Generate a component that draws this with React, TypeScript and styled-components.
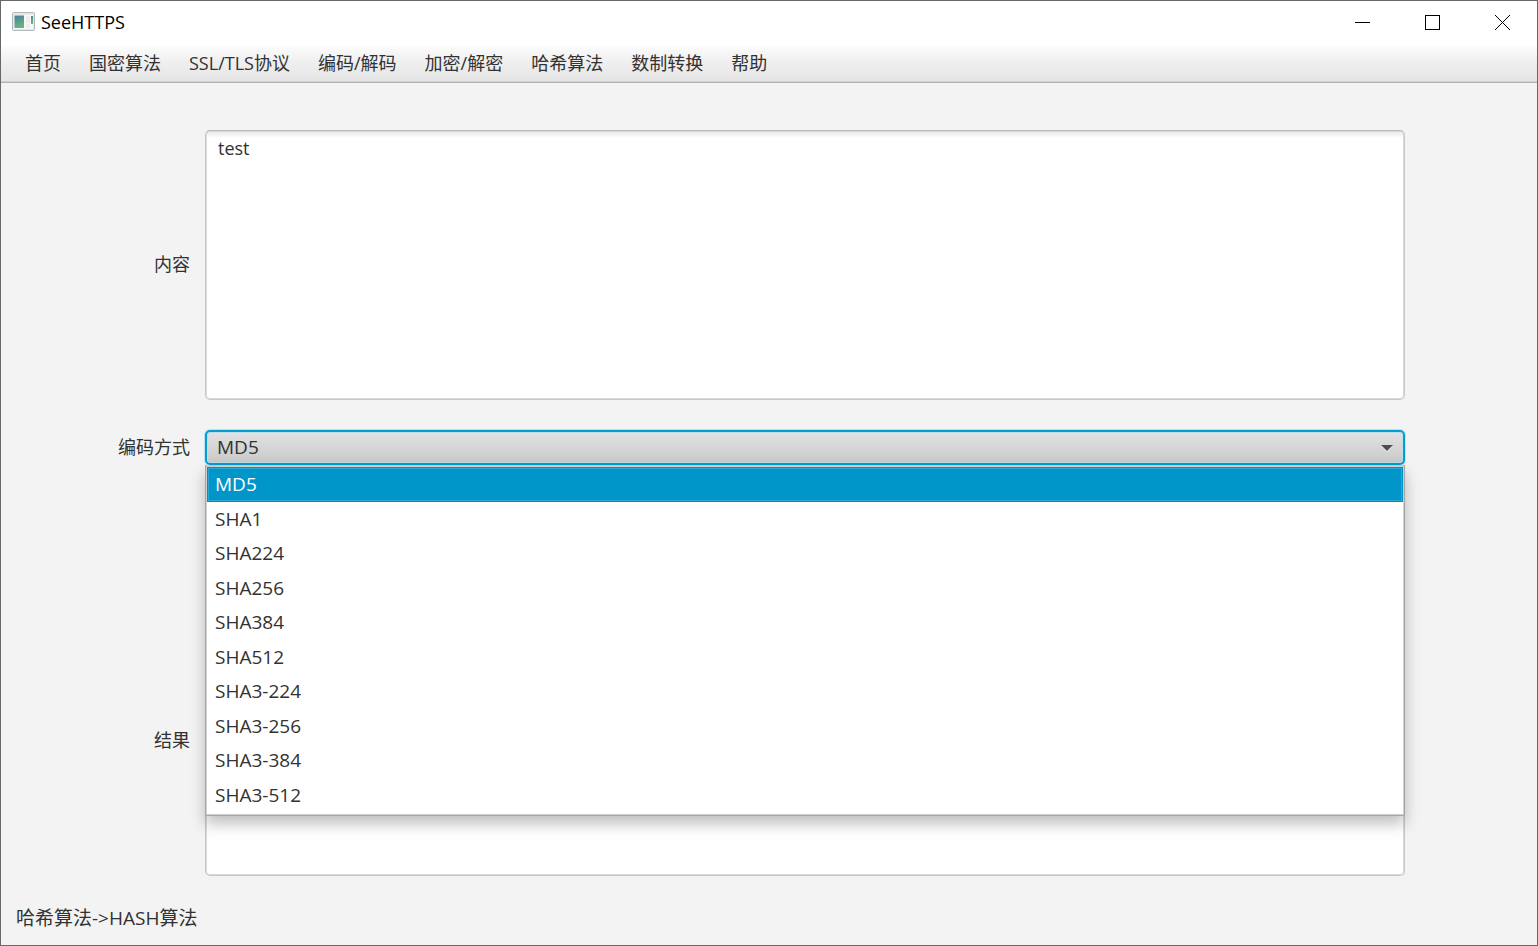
import React, { useState } from 'react';
import styled, { createGlobalStyle } from 'styled-components';

const GlobalStyle = createGlobalStyle`
  *, *::before, *::after { box-sizing: border-box; }
  body {
    margin: 0;
    background: #f3f3f3;
    color: #323232;
    font: 18px/24px "Open Sans", "Noto Sans CJK SC", sans-serif;
  }
  button, select, textarea { font: inherit; color: inherit; margin: 0; }
`;

const Window = styled.div`
  display: flex;
  flex-direction: column;
  min-height: 100vh;
  border: 1px solid #67686a;
  background: #f3f3f3;
`;

const TitleBar = styled.header`
  display: flex;
  align-items: center;
  height: 45px;
  padding: 0 0 4px 11px;
  background: #fff;
  color: #000;
`;

const AppIcon = styled.svg`
  width: 23px;
  height: 19px;
  margin-right: 6px;
`;

const Title = styled.h1`
  flex: 1;
  margin: 0;
  font-size: 18px;
  font-weight: 400;
`;

const WindowButton = styled.button`
  display: grid;
  place-items: center;
  align-self: flex-start;
  width: 70px;
  height: 43px;
  padding: 0;
  border: 0;
  background: transparent;
`;

const MenuBar = styled.nav`
  display: flex;
  align-items: center;
  gap: 28px;
  height: 37px;
  padding: 0 24px 2px;
  border-bottom: 1px solid #b2b2b2;
  background: linear-gradient(#fcfcfc, #f0f0f0 40%, #e4e4e4);
  box-shadow: inset 0 -1px #d0d0d0;
`;

const MenuButton = styled.button`
  padding: 0;
  border: 0;
  background: transparent;
  white-space: nowrap;
`;

const Form = styled.form`
  flex: 1;
  display: flex;
  flex-direction: column;
  gap: 30px;
  padding: 47px 132px 0 15px;
`;

const Row = styled.div<{ $last?: boolean }>`
  display: grid;
  grid-template-columns: 174px 1fr;
  align-items: center;
  column-gap: 15px;
  margin-top: ${(p) => (p.$last ? 'auto' : '0')};
`;

const Label = styled.label`
  padding-bottom: 2px;
  text-align: right;
`;

const TextArea = styled.textarea`
  display: block;
  width: 100%;
  height: 270px;
  padding: 5px 12px;
  border: 1px solid #c8c8c8;
  border-top-color: #b8b8b8;
  border-radius: 5px;
  outline: 0;
  resize: none;
  background: linear-gradient(#e6e6e6, #fff 7px);
  box-shadow: inset 0 0 0 1px #d9d9d9;
`;

const Combo = styled.div`
  position: relative;
`;

const Select = styled.select`
  display: block;
  width: 100%;
  height: 35px;
  padding: 0 10px 2px;
  appearance: none;
  border: 2px solid #039ed3;
  border-radius: 5px;
  outline: 0;
  background: linear-gradient(#e2e2e2, #c9c9c9);
  box-shadow: 0 0 0 1px #b9e2f0, inset 0 0 0 1px #bfdde6;
  font-size: 19px;
`;

const Arrow = styled.svg`
  position: absolute;
  top: 14px;
  right: 12px;
  width: 12px;
  height: 8px;
  pointer-events: none;
`;

const Options = styled.div`
  position: absolute;
  z-index: 1;
  top: 100%;
  left: 0;
  right: 0;
  display: grid;
  grid-template-rows: repeat(10, 1fr);
  height: 351px;
  padding: 1px 1px 3px;
  border: 1px solid #a6a6a6;
  border-top-color: #c4c4c4;
  background: #fff;
  box-shadow: inset 0 0 0 1px #d0d0d0, 0 8px 14px rgba(0, 0, 0, 0.25);
`;

const Option = styled.button<{ $selected: boolean }>`
  padding: 0 7px;
  border: 1px solid ${(p) => (p.$selected ? '#0091c4' : 'transparent')};
  background: ${(p) => (p.$selected ? '#0096c9' : 'transparent')};
  color: ${(p) => (p.$selected ? '#fff' : 'inherit')};
  box-shadow: ${(p) => (p.$selected ? 'inset 0 0 0 1px #2aa7d2' : 'none')};
  font-size: 19px;
  text-align: left;
`;

const StatusBar = styled.footer`
  padding: 30px 15px 15px;
  font-size: 19px;
`;

const menus = ['首页', '国密算法', 'SSL/TLS协议', '编码/解码', '加密/解密', '哈希算法', '数制转换', '帮助'];
const algorithms = ['MD5', 'SHA1', 'SHA224', 'SHA256', 'SHA384', 'SHA512', 'SHA3-224', 'SHA3-256', 'SHA3-384', 'SHA3-512'];

export default function App() {
  const [algorithm, setAlgorithm] = useState('MD5');
  const [content, setContent] = useState('test');

  return (
    <Window>
      <GlobalStyle />
      <TitleBar>
        <AppIcon viewBox="0 0 23 19" aria-hidden="true">
          <defs>
            <linearGradient id="pane" x1="0" y1="0" x2="0.3" y2="1">
              <stop offset="0" stopColor="#4a7d9f" />
              <stop offset="1" stopColor="#62b87c" />
            </linearGradient>
          </defs>
          <rect x="0.5" y="0.5" width="22" height="18" rx="1" fill="#e6e7e8" stroke="#b3b8bb" />
          <rect x="2" y="3" width="19" height="14" fill="#f8f8f8" />
          <rect x="2.5" y="3.5" width="9.5" height="12.5" fill="url(#pane)" />
          <rect x="14" y="4" width="4" height="7" fill="#eeeeee" />
          <rect x="14" y="12" width="4" height="4" fill="#eeeeee" />
          <rect x="19" y="4" width="2" height="8" fill="url(#pane)" />
        </AppIcon>
        <Title>SeeHTTPS</Title>
        <WindowButton type="button" aria-label="最小化">
          <svg width="15" height="15" shapeRendering="crispEdges">
            <path d="M0 7.5H15" stroke="#000" />
          </svg>
        </WindowButton>
        <WindowButton type="button" aria-label="最大化">
          <svg width="15" height="15" shapeRendering="crispEdges">
            <rect x="0.5" y="0.5" width="14" height="14" fill="none" stroke="#000" />
          </svg>
        </WindowButton>
        <WindowButton type="button" aria-label="关闭">
          <svg width="15" height="15">
            <path d="M0 0L15 15M15 0L0 15" stroke="#000" />
          </svg>
        </WindowButton>
      </TitleBar>
      <MenuBar>
        {menus.map((name) => (
          <MenuButton key={name} type="button">{name}</MenuButton>
        ))}
      </MenuBar>
      <Form>
        <Row>
          <Label htmlFor="content">内容</Label>
          <TextArea id="content" spellCheck={false} value={content} onChange={(e) => setContent(e.target.value)} />
        </Row>
        <Row>
          <Label htmlFor="algorithm">编码方式</Label>
          <Combo>
            <Select id="algorithm" value={algorithm} onChange={(e) => setAlgorithm(e.target.value)}>
              {algorithms.map((name) => <option key={name}>{name}</option>)}
            </Select>
            <Arrow viewBox="0 0 12 8" aria-hidden="true">
              <path d="M0 2H12L6 8Z" fill="#f4f4f4" />
              <path d="M0 1H12L6 7Z" fill="#4d4d4d" />
            </Arrow>
            <Options role="listbox" aria-label="编码方式">
              {algorithms.map((name) => (
                <Option
                  key={name}
                  type="button"
                  role="option"
                  aria-selected={name === algorithm}
                  $selected={name === algorithm}
                  onClick={() => setAlgorithm(name)}
                >
                  {name}
                </Option>
              ))}
            </Options>
          </Combo>
        </Row>
        <Row $last>
          <Label htmlFor="result">结果</Label>
          <TextArea id="result" readOnly />
        </Row>
      </Form>
      <StatusBar>哈希算法-&gt;HASH算法</StatusBar>
    </Window>
  );
}
